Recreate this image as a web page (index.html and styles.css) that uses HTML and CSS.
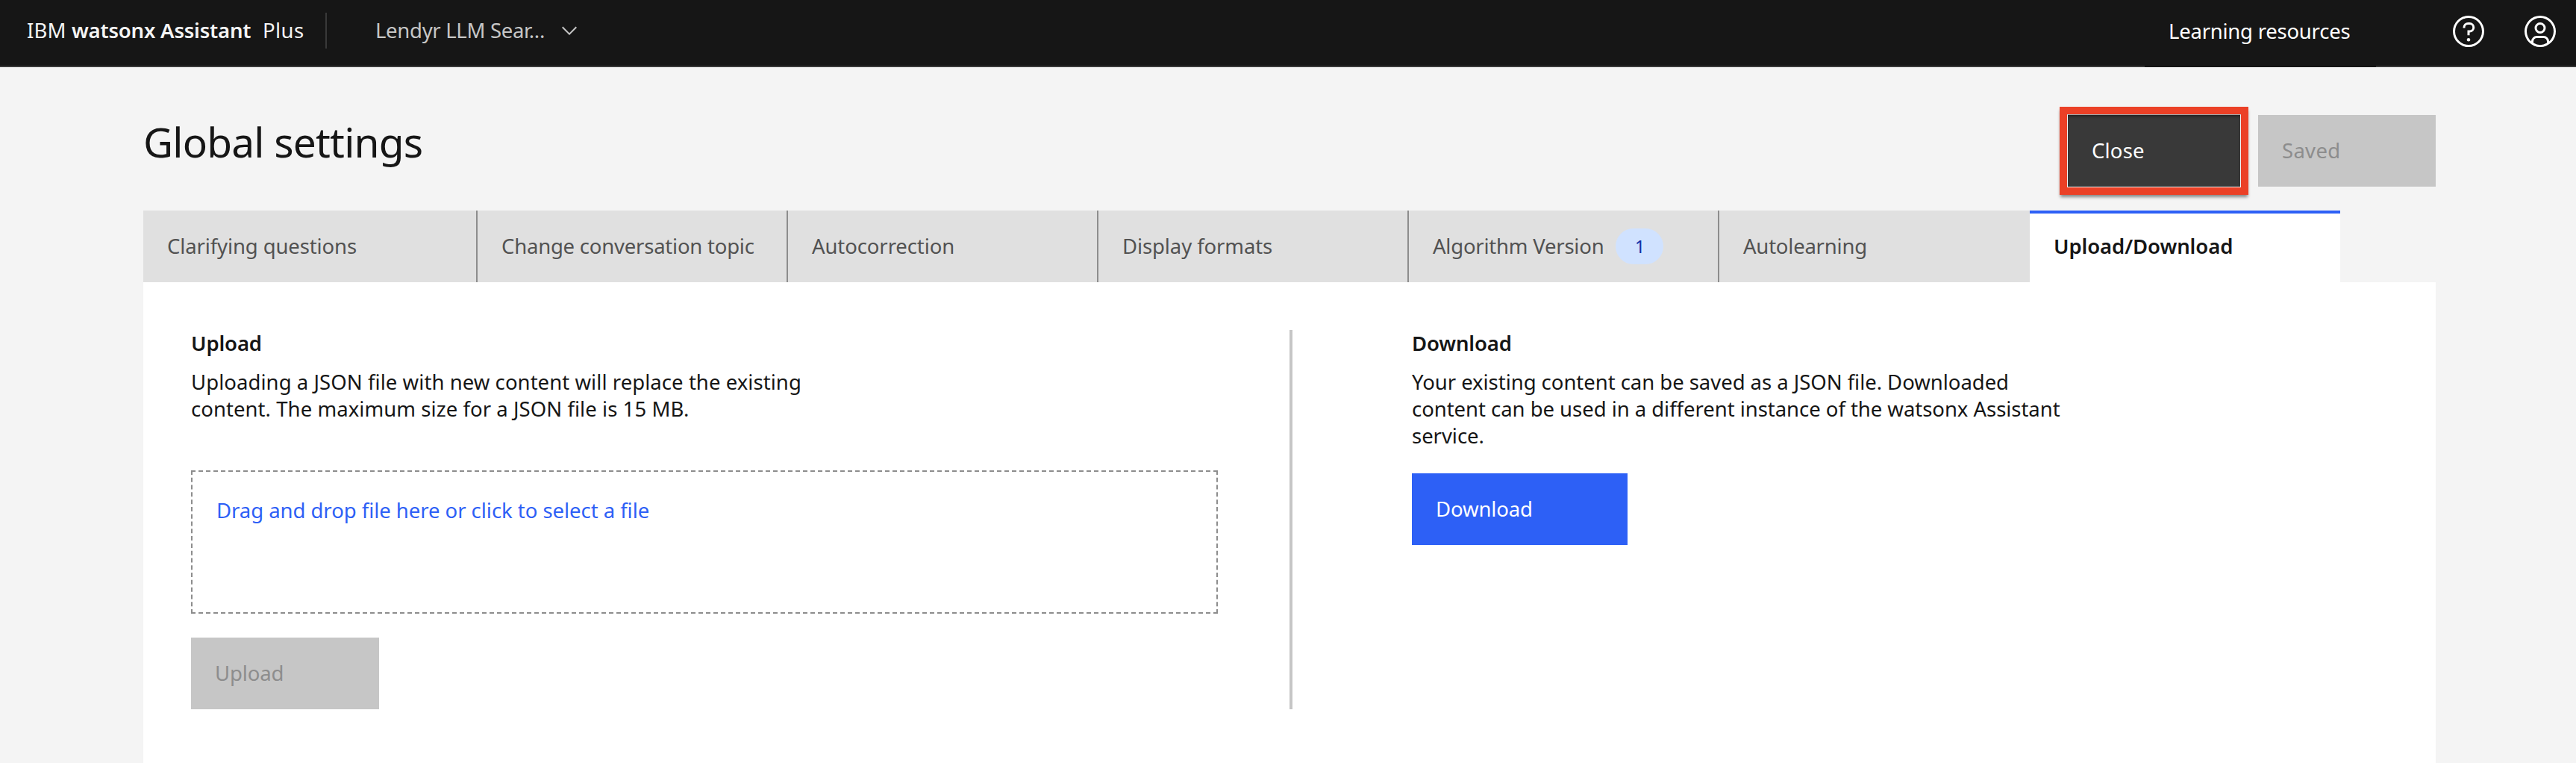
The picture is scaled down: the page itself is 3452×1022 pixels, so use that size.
FILE: index.html
```html
<!DOCTYPE html>
<html lang="en">
<head>
<meta charset="utf-8">
<title>Global settings</title>
<link rel="stylesheet" href="styles.css">
</head>
<body>
<header class="header">
  <div class="brand"><span class="brand-ibm">IBM</span><b class="brand-name">watsonx Assistant</b><span class="brand-plan">Plus</span></div>
  <div class="header-divider"></div>
  <div class="switcher">
    <span>Lendyr LLM Sear...</span>
    <svg class="chevron" viewBox="0 0 16 16"><path d="M8 11 3 6l.7-.7L8 9.600l4.300-4.300.7.7z"/></svg>
  </div>
  <div class="learning">Learning resources</div>
  <div class="header-actions">
    <svg class="action-icon" viewBox="0 0 32 32"><path d="M16 2a14 14 0 1 0 14 14A14 14 0 0 0 16 2zm0 26a12 12 0 1 1 12-12 12 12 0 0 1-12 12z"/><circle cx="16" cy="23.500" r="1.500"/><path d="M17 8h-1.500a4.490 4.490 0 0 0-4.500 4.500v.5h2v-.5a2.500 2.500 0 0 1 2.500-2.500H17a2.500 2.500 0 0 1 0 5h-2v4.500h2V17a4.500 4.500 0 0 0 0-9z"/></svg>
    <svg class="action-icon" viewBox="0 0 32 32"><path d="M16 8a5 5 0 1 0 5 5 5 5 0 0 0-5-5zm0 8a3 3 0 1 1 3-3 3 3 0 0 1-3 3z"/><path d="M16 2a14 14 0 1 0 14 14A14.016 14.016 0 0 0 16 2zm-6 24.377V25a3 3 0 0 1 3-3h6a3 3 0 0 1 3 3v1.377a11.900 11.900 0 0 1-12 0zm13.993-1.451A5.002 5.002 0 0 0 19 20h-6a5.002 5.002 0 0 0-4.992 4.926 12 12 0 1 1 15.985 0z"/></svg>
  </div>
</header>
<main class="page">
  <div class="page-head">
    <h1 class="title">Global settings</h1>
    <div class="page-actions">
      <button class="btn btn-close">Close</button>
      <button class="btn btn-saved" disabled>Saved</button>
    </div>
  </div>
  <nav class="tabs">
    <a class="tab tab-first">Clarifying questions</a>
    <a class="tab tab-tight">Change conversation topic</a>
    <a class="tab">Autocorrection</a>
    <a class="tab">Display formats</a>
    <a class="tab tab-tight">Algorithm Version<span class="tag">1</span></a>
    <a class="tab tab-tight">Autolearning</a>
    <a class="tab tab-selected">Upload/Download</a>
  </nav>
  <section class="panel">
    <div class="upload">
      <h2 class="heading">Upload</h2>
      <p class="text text-upload">Uploading a JSON file with new content will replace the existing<br>content. The maximum size for a JSON file is 15 MB.</p>
      <div class="dropzone">Drag and drop file here or click to select a file</div>
      <button class="btn btn-upload" disabled>Upload</button>
    </div>
    <div class="panel-divider"></div>
    <div class="download">
      <h2 class="heading">Download</h2>
      <p class="text">Your existing content can be saved as a JSON file. Downloaded<br>content can be used in a different instance of the watsonx Assistant<br>service.</p>
      <button class="btn btn-download">Download</button>
    </div>
  </section>
</main>
</body>
</html>
```
FILE: styles.css
```css
* { box-sizing: border-box; }

body {
  margin: 0;
  height: 1022px;
  display: flex;
  flex-direction: column;
  overflow: hidden;
  background: #f4f4f4;
  color: #161616;
  font: 27.5px/36px "Noto Sans", "Open Sans", sans-serif;
}

h1, h2, p { margin: 0; }

/* Header */
.header {
  display: flex;
  align-items: flex-start;
  height: 90px;
  flex: none;
  background: #161616;
  box-shadow: inset 0 -2px #393939;
  color: #f4f4f4;
}
.brand {
  display: flex;
  width: 436px;
  padding: 23px 0 0 36px;
  white-space: nowrap;
}
.brand-ibm { width: 60px; letter-spacing: 0.2px; }
.brand-name { width: 256px; font-weight: 600; letter-spacing: -0.2px; }
.brand-plan { letter-spacing: 0.4px; }
.header-divider {
  width: 2px;
  height: 48px;
  margin-top: 17px;
  background: #393939;
}
.switcher {
  display: flex;
  padding: 23px 0 0 65px;
  color: #c6c6c6;
  letter-spacing: -0.3px;
}
.switcher span { width: 244px; }
.chevron { width: 32px; height: 32px; margin-top: 2px; fill: #c6c6c6; }
.learning {
  width: 310px;
  height: 90px;
  margin-left: auto;
  margin-right: 76px;
  padding: 24px 0 0 32px;
  background: #161616;
  color: #fff;
  letter-spacing: -0.24px;
}
.header-actions {
  display: flex;
  gap: 48px;
  padding: 18px 24px 0;
}
.action-icon { width: 48px; height: 48px; fill: #fff; }

/* Page heading */
.page {
  display: flex;
  flex-direction: column;
  flex: 1;
  width: 3072px;
  margin: 0 188px 0 192px;
}
.page-head {
  display: flex;
  justify-content: space-between;
  height: 192px;
}
.title {
  padding-top: 60px;
  font-size: 55px;
  line-height: 80px;
  font-weight: 400;
  letter-spacing: -0.78px;
}
.page-actions {
  display: flex;
  gap: 23px;
  padding-top: 64px;
}
.btn {
  display: block;
  height: 96px;
  padding: 0 32px;
  border: 0;
  border-radius: 0;
  font: inherit;
  text-align: left;
  color: #fff;
}
.btn-close {
  width: 233px;
  height: 98px;
  margin-top: -1px;
  border: 1px solid #f4f4f4;
  border-top-color: #a8a8a8;
  background: #393939;
  outline: 10px solid #eb4026;
  box-shadow: 0 4px 4px 9px rgba(0, 0, 0, 0.45), inset 0 4px 4px -2px rgba(0, 0, 0, 0.4);
  letter-spacing: 0.2px;
}
.btn-saved { width: 238px; letter-spacing: 0.3px; }
.btn-saved, .btn-upload { background: #c6c6c6; color: #8d8d8d; }

/* Tabs */
.tabs {
  display: flex;
  height: 96px;
}
.tab {
  display: flex;
  align-items: center;
  width: 416px;
  padding: 0 0 0 32px;
  background: #e0e0e0;
  border-right: 2px solid #8d8d8d;
  color: #525252;
  letter-spacing: -0.1px;
  white-space: nowrap;
}
.tab-first { width: 448px; letter-spacing: -0.12px; }
.tab-tight { letter-spacing: -0.22px; }
.tab:nth-child(6) { border-right: 0; }
.tab-selected {
  border-right: 0;
  background: #fff;
  box-shadow: inset 0 4px #2d60f6;
  color: #161616;
  font-weight: 600;
}
.tag {
  width: 64px;
  height: 48px;
  margin-left: 16px;
  border-radius: 24px;
  background: #d0e2ff;
  color: #0f2fa8;
  font-size: 24px;
  line-height: 48px;
  text-align: center;
}

/* Panel */
.panel {
  display: flex;
  align-items: flex-start;
  flex: 1;
  padding: 64px;
  background: #fff;
}
.upload { width: 1376px; }
.heading {
  margin-bottom: 16px;
  font-size: 27.5px;
  line-height: 36px;
  font-weight: 600;
  letter-spacing: -0.15px;
}
.text { letter-spacing: -0.04px; white-space: nowrap; }
.text-upload { letter-spacing: 0.06px; }
.dropzone {
  height: 192px;
  margin: 64px 0 32px;
  padding: 34px 32px;
  border: 2px dashed #8d8d8d;
  color: #2d60f6;
  letter-spacing: -0.04px;
}
.btn-upload { width: 252px; letter-spacing: -0.15px; }
.panel-divider {
  width: 4px;
  height: 508px;
  margin: 0 160px 0 96px;
  background: #c6c6c6;
}
.btn-download {
  width: 289px;
  margin-top: 32px;
  background: #2d60f6;
  letter-spacing: -0.12px;
}
```
